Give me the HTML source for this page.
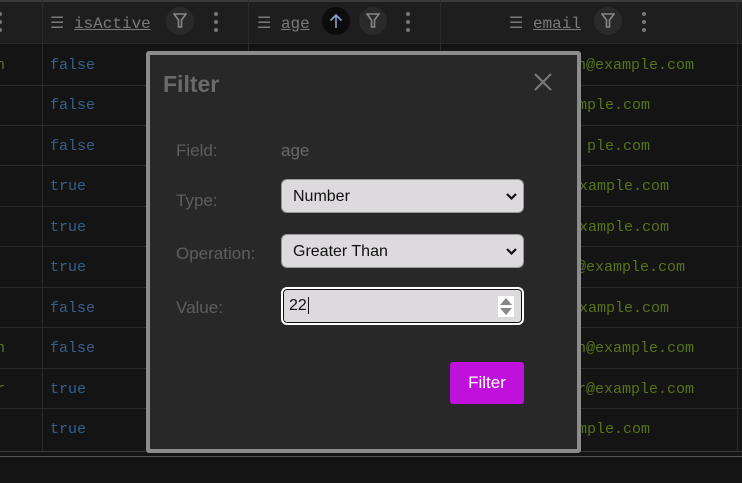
<!DOCTYPE html>
<html><head><style>
*{margin:0;padding:0;box-sizing:border-box}
body{width:742px;height:483px;background:#141414;position:relative;overflow:hidden;font-family:"Liberation Sans",sans-serif}
.a{position:absolute}
.hdr{left:0;top:0;width:742px;height:44px;background:#1e1e1e;border-top:2px solid #3a3a3a;border-bottom:1px solid #2a2a2a}
.vl{top:0;width:1px;height:452px;background:#2a2a2a}
.hl{left:0;width:742px;height:1px;background:#2a2a2a}
.m{font-family:"Liberation Mono",monospace;font-size:15px}
.b{color:#35608c}.g{color:#56741a}
.ht{font-family:"Liberation Mono",monospace;font-size:16px;color:#7a7a7a;top:13px}
.u{text-decoration:underline}
.circ{width:28px;height:28px;border-radius:14px;background:#2a2a2a;top:7px}
.circ svg{position:absolute;left:7px;top:6px}
.dots{width:4px;top:12px}
.dots i{display:block;width:4px;height:4px;border-radius:2px;background:#777;margin-bottom:4px}
.lbl{font-size:17px;color:#5e5e5e}
.sel{left:281px;width:243px;height:34px;background:#dcdadc;border:1px solid #999;border-radius:6px;font-size:16px;color:#111;padding:8px 11px}
</style></head><body>
<div class="a hdr"></div>
<div class="a vl" style="left:42px"></div>
<div class="a vl" style="left:248px"></div>
<div class="a vl" style="left:440px"></div>
<div class="a vl" style="left:737px"></div>
<div class="a dots" style="left:-2px"><i></i><i></i><i></i></div>
<div class="a ht" style="left:50px">☰ <span class="u">isActive</span></div>
<div class="a circ" style="left:166px"><svg width="14" height="16" viewBox="0 0 14 16"><path d="M1 1H13L8.5 7V14H5.5V7Z" stroke="#888" stroke-width="1.6" fill="none"/></svg></div>
<div class="a dots" style="left:214px"><i></i><i></i><i></i></div>
<div class="a ht" style="left:257px">☰ <span class="u">age</span></div>
<div class="a circ" style="left:322px;background:#0c0c0c"><svg width="14" height="16" viewBox="0 0 14 16"><path d="M7 15V2M1.5 7.5L7 2L12.5 7.5" stroke="#8aa0c8" stroke-width="1.6" fill="none"/></svg></div>
<div class="a circ" style="left:359px"><svg width="14" height="16" viewBox="0 0 14 16"><path d="M1 1H13L8.5 7V14H5.5V7Z" stroke="#888" stroke-width="1.6" fill="none"/></svg></div>
<div class="a dots" style="left:406px"><i></i><i></i><i></i></div>
<div class="a ht" style="left:509px">☰ <span class="u">email</span></div>
<div class="a circ" style="left:594px"><svg width="14" height="16" viewBox="0 0 14 16"><path d="M1 1H13L8.5 7V14H5.5V7Z" stroke="#888" stroke-width="1.6" fill="none"/></svg></div>
<div class="a dots" style="left:642px"><i></i><i></i><i></i></div>

<div class="a hl" style="top:85px"></div><div class="a hl" style="top:125px"></div><div class="a hl" style="top:165px"></div><div class="a hl" style="top:206px"></div><div class="a hl" style="top:246px"></div><div class="a hl" style="top:287px"></div><div class="a hl" style="top:327px"></div><div class="a hl" style="top:368px"></div><div class="a hl" style="top:408px"></div>
<div class="a hl" style="top:451px;background:#3a3a3a"></div><div class="a hl" style="top:456px;background:#555"></div>

<div class="a m b" style="left:50px;top:57px">false</div>
<div class="a m b" style="left:50px;top:97px">false</div>
<div class="a m b" style="left:50px;top:138px">false</div>
<div class="a m b" style="left:50px;top:178px">true</div>
<div class="a m b" style="left:50px;top:219px">true</div>
<div class="a m b" style="left:50px;top:259px">true</div>
<div class="a m b" style="left:50px;top:300px">false</div>
<div class="a m b" style="left:50px;top:340px">false</div>
<div class="a m b" style="left:50px;top:381px">true</div>
<div class="a m b" style="left:50px;top:421px">true</div>
<div class="a m" style="color:#56741a;left:-4px;top:57px">n</div>
<div class="a m" style="color:#56741a;left:-4px;top:340px">n</div>
<div class="a m" style="color:#56741a;left:-4px;top:381px">r</div>
<div class="a m g" style="left:568px;top:57px">on@example.com</div>
<div class="a m g" style="left:569px;top:97px">ample.com</div>
<div class="a m g" style="left:587px;top:138px">ple.com</div>
<div class="a m g" style="left:570px;top:178px">example.com</div>
<div class="a m g" style="left:570px;top:219px">example.com</div>
<div class="a m g" style="left:568px;top:259px">e@example.com</div>
<div class="a m g" style="left:570px;top:300px">example.com</div>
<div class="a m g" style="left:568px;top:340px">on@example.com</div>
<div class="a m g" style="left:568px;top:381px">er@example.com</div>
<div class="a m g" style="left:569px;top:421px">ample.com</div>

<div class="a" style="left:146px;top:51px;width:435px;height:402px;background:#282828;border:4px solid #8c8c8c;border-radius:3px"></div>
<div class="a" style="left:163px;top:71px;font-size:23px;font-weight:bold;color:#6a6a6a">Filter</div>
<svg class="a" style="left:534px;top:73px" width="18" height="18" viewBox="0 0 18 18"><path d="M1 1L17 17M17 1L1 17" stroke="#7a7a7a" stroke-width="2"/></svg>
<div class="a lbl" style="left:176px;top:141px">Field:</div>
<div class="a lbl" style="left:281px;top:141px;color:#6a6a6a">age</div>
<div class="a lbl" style="left:176px;top:191px">Type:</div>
<div class="a lbl" style="left:176px;top:244px">Operation:</div>
<div class="a lbl" style="left:176px;top:298px">Value:</div>
<div class="a sel" style="top:179px">Number<svg class="a" style="right:6px;top:13px" width="11" height="8" viewBox="0 0 11 8"><path d="M1 1l4.5 4.5L10 1" stroke="#111" stroke-width="2.2" fill="none"/></svg></div>
<div class="a sel" style="top:234px">Greater Than<svg class="a" style="right:6px;top:13px" width="11" height="8" viewBox="0 0 11 8"><path d="M1 1l4.5 4.5L10 1" stroke="#111" stroke-width="2.2" fill="none"/></svg></div>
<div class="a sel" style="top:287px;height:38px;border:2px solid #fff;box-shadow:0 0 0 1px #111 inset;padding:8px 6px">22<span style="border-left:1px solid #111;margin-left:1px"></span>
<svg class="a" style="right:8px;top:7px" width="16" height="21" viewBox="0 0 16 21"><rect width="16" height="21" fill="#fff"/><path d="M2 9L8 2L14 9Z M2 12L8 19L14 12Z" fill="#888"/></svg></div>
<div class="a" style="left:450px;top:362px;width:74px;height:42px;background:#c010dc;border-radius:3px;color:#fff;font-size:17px;text-align:center;line-height:42px">Filter</div>
</body></html>
